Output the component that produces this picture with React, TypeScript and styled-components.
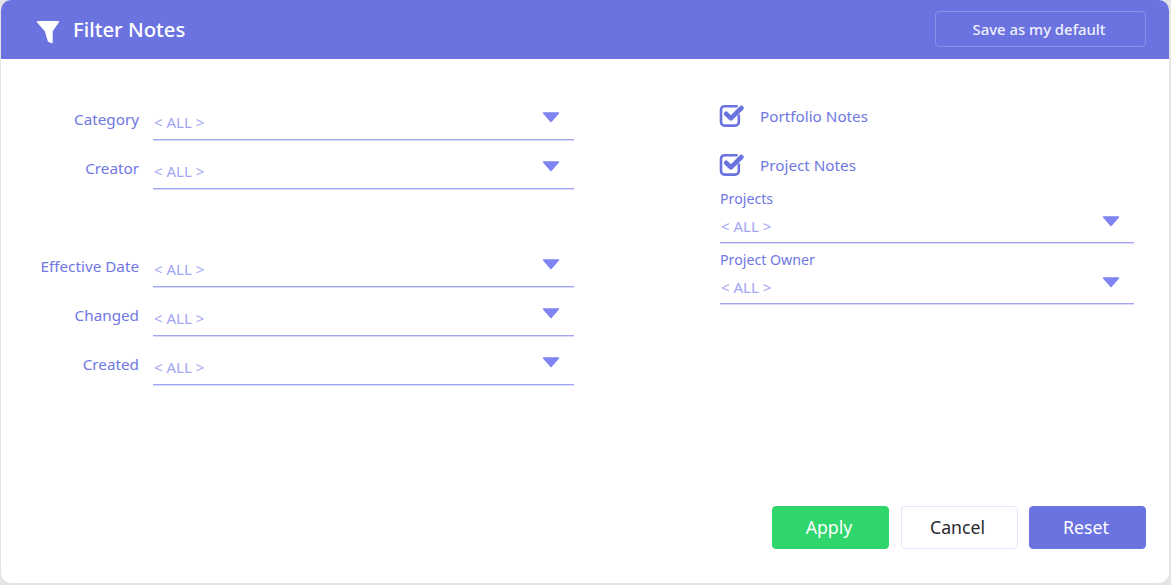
import React from "react";
import styled, { createGlobalStyle } from "styled-components";

const Global = createGlobalStyle`
  html, body { margin: 0; padding: 0; background: #e4e4e6; }
  body { font-family: "Noto Sans", "Open Sans", sans-serif; width: 1171px; height: 585px; overflow: hidden; }
`;

const Dialog = styled.div`
  width: 1168px; height: 583px; margin-left: 1px;
  background: #fff; border-radius: 10px; overflow: hidden;
  display: flex; flex-direction: column;
`;
const Header = styled.header`
  height: 59px; flex: none; background: #6b73e0;
  display: flex; align-items: center; justify-content: space-between;
  padding: 0 23px 0 35px; box-sizing: border-box;
`;
const Title = styled.div`
  display: flex; align-items: center; gap: 12px; margin-top: -1px;
  color: #fff; font-size: 20.3px; font-weight: 500; line-height: 28px;
`;
const SaveButton = styled.button`
  width: 211px; height: 36px; margin-top: -1px; padding: 0 3px 0 0; box-sizing: border-box;
  background: transparent; border: 1px solid #8a90ea; border-radius: 4px;
  color: #f0f1fe; font: 500 14.9px "Noto Sans", sans-serif; cursor: pointer;
`;
const Body = styled.main`
  flex: 1; display: flex; padding-top: 31px; box-sizing: border-box;
`;
const LeftColumn = styled.section`
  width: 573px; flex: none; display: flex; flex-direction: column;
`;
const RightColumn = styled.section`
  width: 414px; margin-left: 146px; flex: none; display: flex; flex-direction: column;
`;
const FilterRow = styled.div<{ $gapBefore?: boolean }>`
  height: 49px; display: flex; align-items: flex-start;
  margin-top: ${p => (p.$gapBefore ? "49px" : "0")};
`;
const RowLabel = styled.label`
  width: 138px; margin-right: 14px; flex: none; text-align: right;
  color: #6f77e3; font-size: 15.25px; line-height: 20px; padding-top: 19px;
`;
const SelectBox = styled.div<{ $h: number }>`
  flex: 1 0 auto; height: ${p => p.$h}px; box-sizing: border-box;
  border-bottom: 1px solid #a3a6f6;
  box-shadow: 0 1px 0 #d9dafc;
  display: flex; justify-content: space-between; align-items: flex-start;
`;
const SelectValue = styled.span<{ $top: number }>`
  color: #a3a6f6; font-size: 15px; line-height: 20px;
  margin-left: 1px; padding-top: ${p => p.$top}px;
`;
const Caret = styled.svg<{ $top: number; $right: number }>`
  width: 18px; height: 11px; flex: none;
  margin-top: ${p => p.$top}px; margin-right: ${p => p.$right}px;
`;
const CheckRow = styled.div`
  height: 49px; display: flex; align-items: center; gap: 16px;
  color: #6f77e3; font-size: 15.25px; line-height: 20px; margin-left: -1px;
`;
const FieldLabel = styled.div`
  color: #6f77e3; font-size: 14.2px; line-height: 20px; height: 20px;
`;
const Field = styled.div`
  display: flex; flex-direction: column; margin-bottom: 7px;
`;
const ChecksTop = styled.div`
  margin-top: 1px;
  display: flex; flex-direction: column;
`;
const Footer = styled.footer`
  display: flex; justify-content: flex-end; gap: 11.5px;
  padding: 0 23px 34px 0;
`;
const ActionButton = styled.button<{ $variant: "apply" | "cancel" | "reset" }>`
  width: 117px; height: 43px; padding: 0 3px 2px 0; box-sizing: border-box; border-radius: 4px;
  font: 400 17.7px "Noto Sans", sans-serif; cursor: pointer;
  border: 1px solid ${p => (p.$variant === "apply" ? "#2ed66b" : p.$variant === "reset" ? "#6b73e0" : "#e4e5fc")};
  background: ${p => (p.$variant === "apply" ? "#2ed66b" : p.$variant === "reset" ? "#6b73e0" : "#fff")};
  color: ${p => (p.$variant === "cancel" ? "#2a2a30" : "#fff")};
`;

const DownCaret = ({ top, right }: { top: number; right: number }) => (
  <Caret $top={top} $right={right} viewBox="0 0 18 11">
    <path d="M1.5 1h15L9 9.5z" fill="#7f84f2" stroke="#7f84f2" strokeWidth="1.4" strokeLinejoin="round" />
  </Caret>
);

const FunnelIcon = () => (
  <svg width="25" height="25" viewBox="0 0 25 25" style={{ marginTop: 7 }}>
    <path d="M1.5 1.7H22.5L16 11V22.5L12.5 21L9.5 11Z" fill="#fff" stroke="#fff" strokeWidth="1.4" strokeLinejoin="round" />
  </svg>
);

const CheckIcon = () => (
  <svg width="25" height="25" viewBox="0 0 25 25">
    <path d="M19.8 12.5v6.5a3.6 3.6 0 0 1-3.6 3.6H5.6A3.6 3.6 0 0 1 2 19V6.8a3.6 3.6 0 0 1 3.6-3.6h12" fill="none" stroke="#6b73e0" strokeWidth="2.6" strokeLinecap="round" />
    <path d="M7.2 10.8l4.7 4.6L22.4 5" fill="none" stroke="#6b73e0" strokeWidth="4.6" strokeLinecap="round" strokeLinejoin="round" />
  </svg>
);

const LeftFilter = ({ label, gapBefore }: { label: string; gapBefore?: boolean }) => (
  <FilterRow $gapBefore={gapBefore}>
    <RowLabel>{label}</RowLabel>
    <SelectBox $h={50}>
      <SelectValue $top={22}>&lt; ALL &gt;</SelectValue>
      <DownCaret top={22} right={14} />
    </SelectBox>
  </FilterRow>
);

const RightField = ({ label }: { label: string }) => (
  <Field>
    <FieldLabel>{label}</FieldLabel>
    <SelectBox $h={34}>
      <SelectValue $top={7}>&lt; ALL &gt;</SelectValue>
      <DownCaret top={7} right={14} />
    </SelectBox>
  </Field>
);

export default function App() {
  return (
    <>
      <Global />
      <Dialog>
        <Header>
          <Title>
            <FunnelIcon />
            Filter Notes
          </Title>
          <SaveButton>Save as my default</SaveButton>
        </Header>
        <Body>
          <LeftColumn>
            <LeftFilter label="Category" />
            <LeftFilter label="Creator" />
            <LeftFilter label="Effective Date" gapBefore />
            <LeftFilter label="Changed" />
            <LeftFilter label="Created" />
          </LeftColumn>
          <RightColumn>
            <ChecksTop>
              <CheckRow><CheckIcon />Portfolio Notes</CheckRow>
              <CheckRow><CheckIcon />Project Notes</CheckRow>
            </ChecksTop>
            <RightField label="Projects" />
            <RightField label="Project Owner" />
          </RightColumn>
        </Body>
        <Footer>
          <ActionButton $variant="apply">Apply</ActionButton>
          <ActionButton $variant="cancel">Cancel</ActionButton>
          <ActionButton $variant="reset">Reset</ActionButton>
        </Footer>
      </Dialog>
    </>
  );
}
